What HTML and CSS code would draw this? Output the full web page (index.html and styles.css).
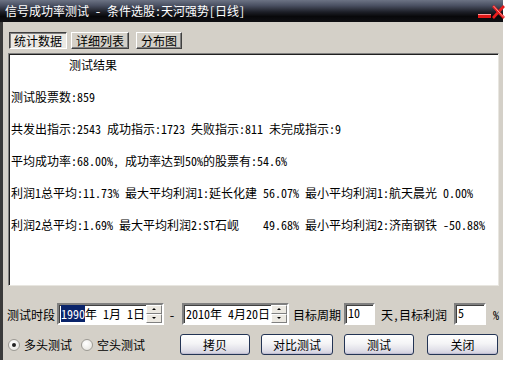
FILE: index.html
```html
<!DOCTYPE html>
<html lang="zh-CN">
<head>
    <meta charset="UTF-8">
    <title>信号成功率测试</title>
    <link rel="stylesheet" href="styles.css">
</head>
<body>

    <div class="window">
        <div class="titlebar">
            <span class="title">信号成功率测试 - 条件选股:天河强势[日线]</span>
            <svg class="controls" width="30" height="20" viewBox="0 0 30 20">
                <rect x="2" y="13" width="13" height="4" fill="#e01818"/>
                <rect x="2" y="13" width="13" height="1" fill="#ff9a9a"/>
                <path d="M17 5 L28 17 M28 5 L17 17" stroke="#e81c1c" stroke-width="2.6"/>
                <path d="M17.5 5 L28 16.5" stroke="#ffb0b0" stroke-width="0.8"/>
            </svg>
        </div>

        <div class="tabs">
            <span class="tab active">统计数据</span>
            <span class="tab">详细列表</span>
            <span class="tab">分布图</span>
        </div>

        <div class="report">
            <div class="line heading">测试结果</div>
            <div class="line">测试股票数:859</div>
            <div class="line">共发出指示:2543 成功指示:1723 失败指示:811 未完成指示:9</div>
            <div class="line">平均成功率:68.00%, 成功率达到50%的股票有:54.6%</div>
            <div class="line">利润1总平均:11.73% 最大平均利润1:延长化建 56.07% 最小平均利润1:航天晨光 0.00%</div>
            <div class="line">利润2总平均:1.69% 最大平均利润2:ST石岘    49.68% 最小平均利润2:济南钢铁 -50.88%</div>
        </div>

        <div class="row period">
            <span class="label">测试时段</span>
            <div class="date first">
                <span class="date-text"><span class="sel">1990</span>年 1月 1日</span>
                <span class="spin"><span class="up"></span><span class="down"></span></span>
            </div>
            <span class="dash">-</span>
            <div class="date second">
                <span class="date-text">2010年 4月20日</span>
                <span class="spin"><span class="up"></span><span class="down"></span></span>
            </div>
            <span class="label cycle">目标周期</span>
            <span class="field days">10</span>
            <span class="label target">天,目标利润</span>
            <span class="field profit">5</span>
            <span class="label pct">%</span>
        </div>

        <div class="row actions">
            <label class="radio"><span class="dot checked"></span>多头测试</label>
            <label class="radio short"><span class="dot"></span>空头测试</label>
            <button class="btn copy">拷贝</button>
            <button class="btn compare">对比测试</button>
            <button class="btn run">测试</button>
            <button class="btn close">关闭</button>
        </div>
    </div>

</body>
</html>
```

FILE: styles.css
```css
body {
    margin: 0;
    background: #fff;
    font-family: "Noto Sans Mono CJK SC", "Liberation Mono", "Noto Sans CJK SC", monospace;
    font-size: 12px;
    color: #000;
}

.window {
    width: 500px;
    height: 360px;
    background: #d4d0c8;
    border-left: 3px solid #3a3a3a;
    display: flex;
    flex-direction: column;
}

.titlebar {
    height: 22px;
    display: flex;
    align-items: center;
    justify-content: space-between;
    background: linear-gradient(#6c7384 0%, #4a5062 25%, #1c1e26 55%, #08080a 75%, #101014 100%);
    margin-left: -3px;
}

.title {
    color: #fff;
    padding-left: 5px;
    white-space: pre;
    line-height: 22px;
}

.controls {
    display: block;
    margin-right: -3px;
}

.tabs {
    display: flex;
    gap: 4px;
    margin: 10px 0 0 6px;
    height: 17px;
}

.tab {
    display: flex;
    align-items: center;
    padding: 0 4px;
    border: 1px solid;
    border-color: #fff #404040 #404040 #fff;
    box-shadow: inset -1px -1px #808080;
}

.tab.active {
    border-color: #404040 #fff #fff #404040;
    box-shadow: inset 1px 1px #808080;
    background: #ebe9e4;
}

.tab + .tab + .tab {
    margin-left: 3px;
}

.report {
    margin: 4px 0 0 5px;
    width: 487px;
    height: 228px;
    background: #fff;
    border: 1px solid;
    border-color: #808080 #e8e6e0 #e8e6e0 #808080;
    box-shadow: inset 1px 1px #202020;
    padding: 3px 0 0 2px;
    box-sizing: content-box;
}

.line {
    height: 16px;
    line-height: 16px;
    margin-bottom: 16px;
    white-space: pre;
}

.heading {
    padding-left: 58px;
}

.row {
    display: flex;
    align-items: center;
}

.period {
    margin-top: 17px;
    height: 22px;
    padding-left: 4px;
}

.label {
    white-space: pre;
}

.date {
    display: flex;
    width: 107px;
    height: 22px;
    box-sizing: border-box;
    background: #fff;
    border: 2px solid;
    border-color: #808080 #fff #fff #808080;
    box-shadow: inset 1px 1px #404040;
    margin-left: 2px;
}

.date-text {
    flex: 1;
    overflow: hidden;
    white-space: pre;
    line-height: 18px;
    padding-left: 2px;
}

.sel {
    background: #0a246a;
    color: #fff;
}

.spin {
    width: 16px;
    display: flex;
    flex-direction: column;
}

.spin span {
    flex: 1;
    background: #ece9e2;
    border: 1px solid;
    border-color: #fff #808080 #808080 #fff;
    position: relative;
}

.spin span::after {
    content: "";
    position: absolute;
    left: 5px;
    top: 2px;
    border-left: 2px solid transparent;
    border-right: 2px solid transparent;
}

.spin .up::after {
    border-bottom: 2px solid #000;
}

.spin .down::after {
    border-top: 2px solid #000;
}

.dash {
    margin: 0 5px;
}

.cycle {
    margin-left: 4px;
}

.field {
    width: 31px;
    height: 22px;
    box-sizing: border-box;
    line-height: 16px;
    background: #fff;
    border: 2px solid;
    border-color: #808080 #fff #fff #808080;
    box-shadow: inset 1px 1px #404040;
    padding-left: 2px;
}

.days {
    margin-left: 3px;
}

.target {
    margin-left: 6px;
}

.profit {
    width: 32px;
    margin-left: 7px;
}

.pct {
    margin-left: 7px;
}

.actions {
    margin-top: 9px;
    height: 21px;
    padding-left: 5px;
}

.radio {
    display: flex;
    align-items: center;
    gap: 4px;
}

.radio.short {
    margin-left: 9px;
}

.dot {
    width: 10px;
    height: 10px;
    border-radius: 50%;
    border: 1px solid #9c9a94;
    background: radial-gradient(circle at 40% 35%, #fff, #e2e0da);
    position: relative;
}

.dot.checked::after {
    content: "";
    position: absolute;
    left: 3px;
    top: 3px;
    width: 4px;
    height: 4px;
    border-radius: 50%;
    background: #222;
}

.btn {
    height: 21px;
    font: inherit;
    border: 1px solid #233454;
    border-radius: 3px;
    background: linear-gradient(#ffffff 0%, #f4f4f6 45%, #e0dfe8 80%, #cfcddc 100%);
    box-shadow: inset 0 -1px #c0bed2;
    padding: 0;
}

.copy {
    width: 70px;
    margin-left: 35px;
}

.compare {
    width: 72px;
    margin-left: 11px;
}

.run {
    width: 70px;
    margin-left: 11px;
}

.close {
    width: 71px;
    margin-left: 13px;
}
```
